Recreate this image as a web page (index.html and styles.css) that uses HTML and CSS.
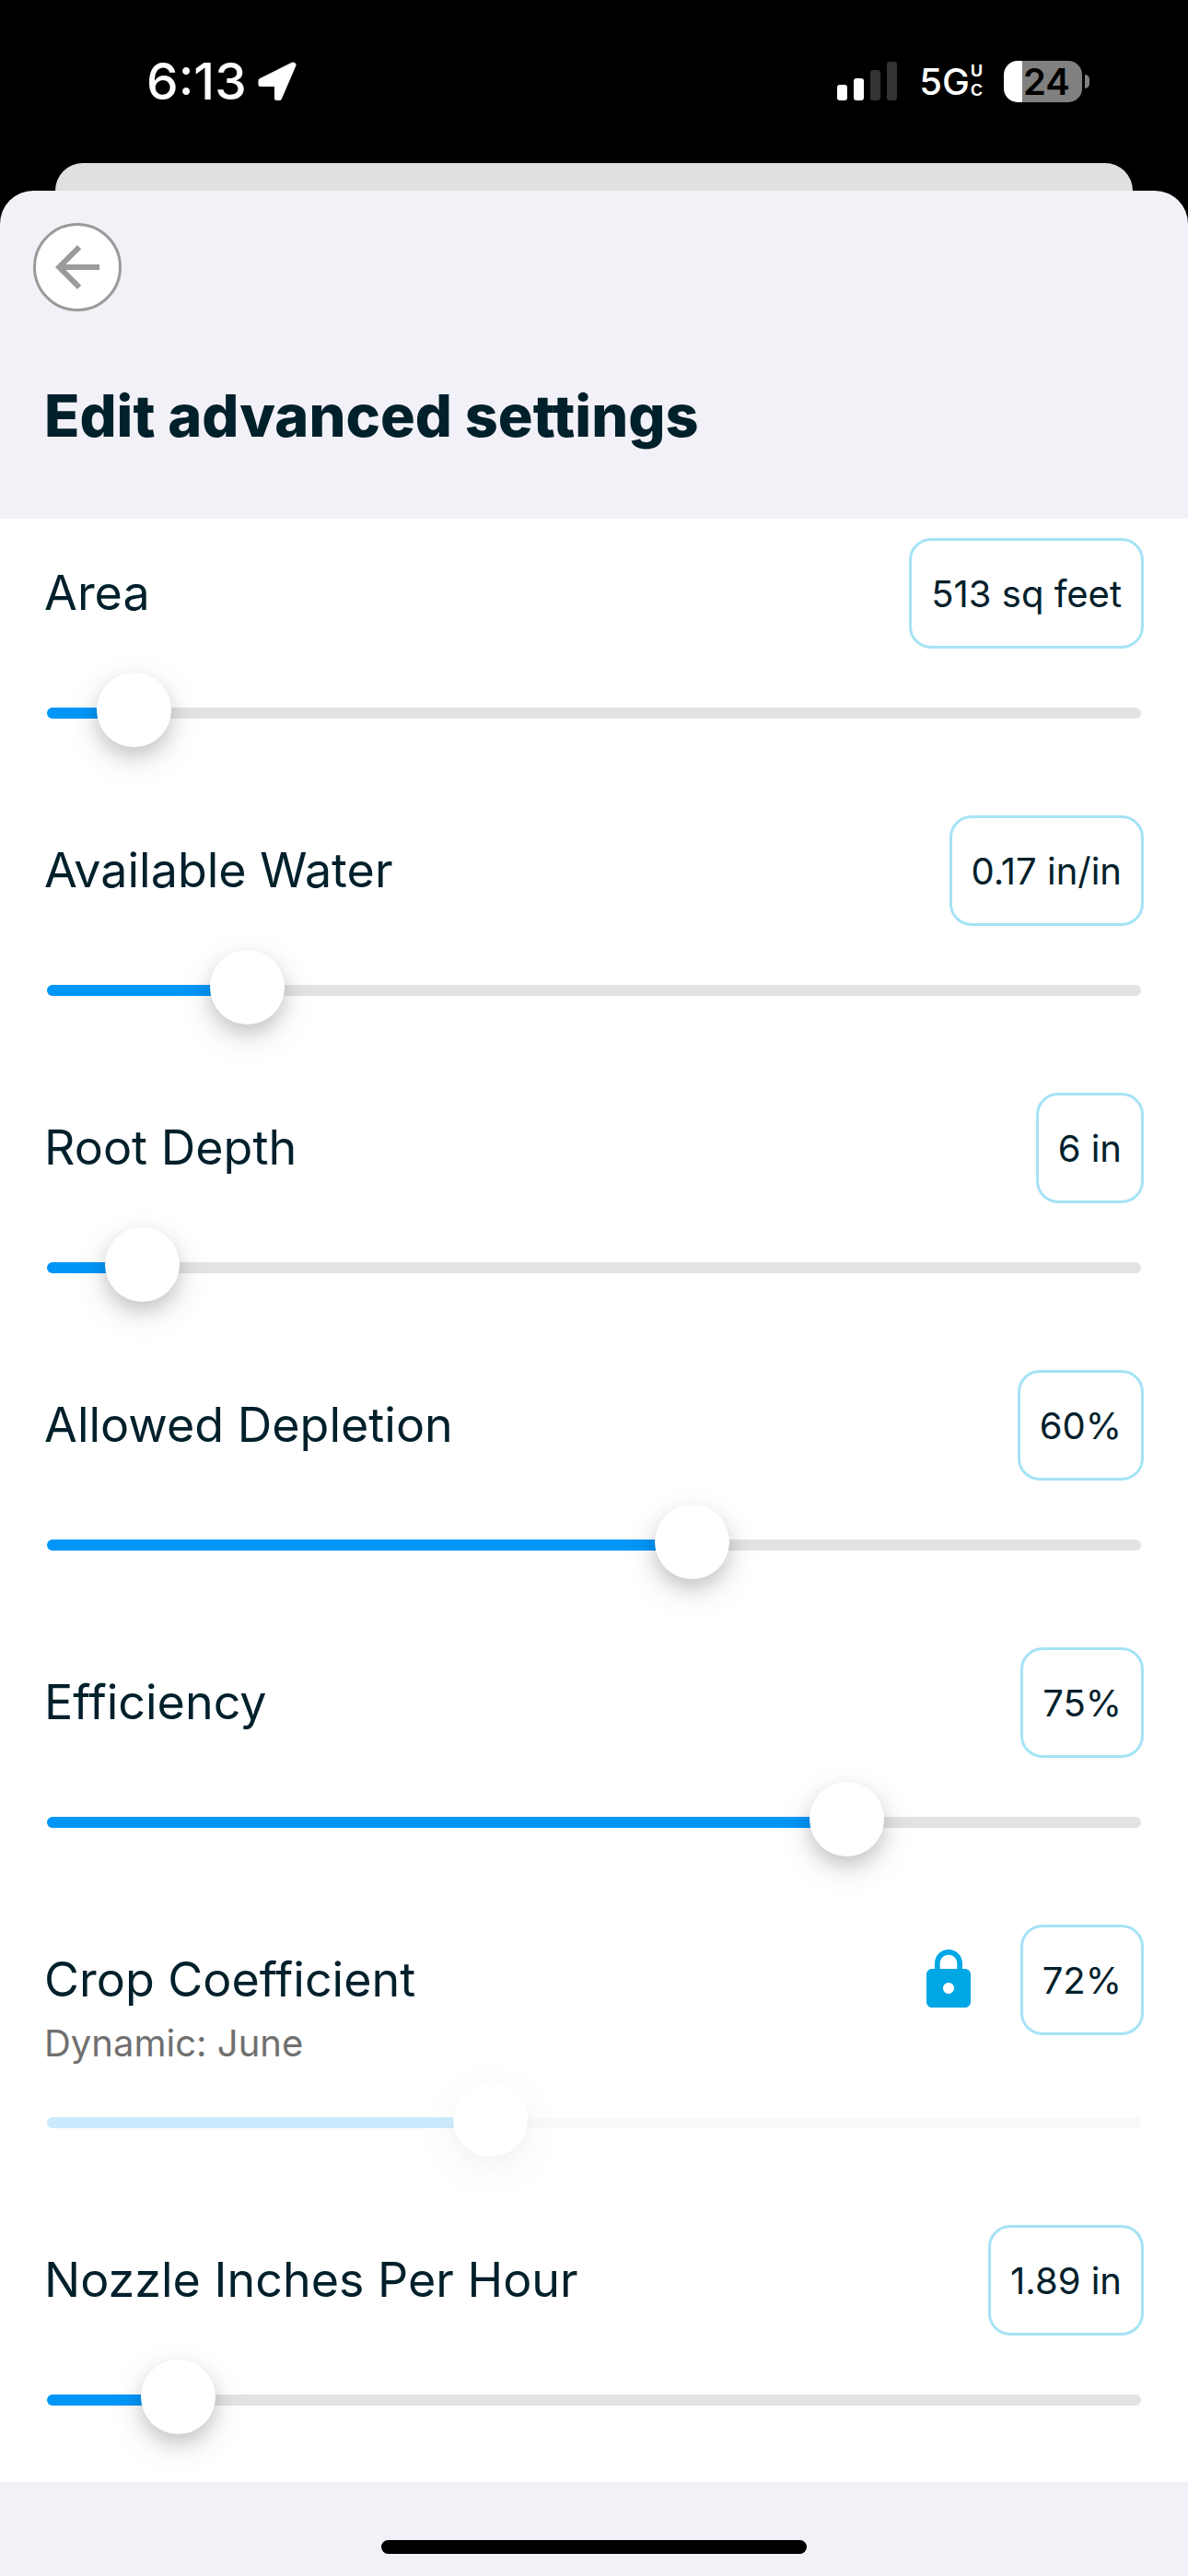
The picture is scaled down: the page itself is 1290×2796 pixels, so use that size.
FILE: index.html
```
<!DOCTYPE html>
<html lang="en">
<head>
  <meta charset="UTF-8">
  <meta name="viewport" content="width=device-width, initial-scale=1.0">
  <title>Edit advanced settings</title>
  <link rel="stylesheet" href="styles.css">
</head>
<body>
  <div class="status-bar">
    <div class="status-left">
      <span class="time">6:13</span>
      <svg class="location" viewBox="0 0 42 42" aria-hidden="true">
        <path d="M38 3 3 20.500V24.500H20.500V39.500H23.500L39 3.500Z" fill="#fff" stroke="#fff" stroke-width="5" stroke-linejoin="round"/>
      </svg>
    </div>
    <div class="status-right">
      <svg class="signal" viewBox="0 0 66 42" aria-hidden="true">
        <rect x="0" y="25" width="11" height="17" rx="3" fill="#fff"/>
        <rect x="18" y="18" width="11" height="24" rx="3" fill="#fff"/>
        <rect x="36" y="9" width="11" height="33" rx="3" fill="#333"/>
        <rect x="54" y="0" width="11" height="42" rx="3" fill="#333"/>
      </svg>
      <div class="network">
        <span>5G</span>
        <span class="network-uc"><span>U</span><span>C</span></span>
      </div>
      <div class="battery">
        <span class="battery-level">24</span>
        <span class="battery-cap"></span>
      </div>
    </div>
  </div>

  <div class="sheet-behind"></div>

  <main class="sheet">
    <header class="sheet-header">
      <button class="back" type="button" aria-label="Back">
        <svg viewBox="0 0 24 24" aria-hidden="true">
          <path d="M20 11H7.830l5.590-5.590L12 4l-8 8 8 8 1.410-1.410L7.830 13H20v-2z"/>
        </svg>
      </button>
      <h1>Edit advanced settings</h1>
    </header>

    <section class="settings">
      <div class="setting">
        <div class="setting-head">
          <label for="area">Area</label>
          <button class="value" type="button">513 sq feet</button>
        </div>
        <input type="range" id="area" min="0" max="100" step="0.1" value="4.9" style="--value: 4.9">
      </div>

      <div class="setting">
        <div class="setting-head">
          <label for="water">Available Water</label>
          <button class="value" type="button">0.17 in/in</button>
        </div>
        <input type="range" id="water" min="0" max="100" step="0.1" value="16" style="--value: 16">
      </div>

      <div class="setting">
        <div class="setting-head">
          <label for="root">Root Depth</label>
          <button class="value" type="button">6 in</button>
        </div>
        <input type="range" id="root" min="0" max="100" step="0.1" value="5.7" style="--value: 5.7">
      </div>

      <div class="setting">
        <div class="setting-head">
          <label for="depletion">Allowed Depletion</label>
          <button class="value" type="button">60%</button>
        </div>
        <input type="range" id="depletion" min="0" max="100" step="0.1" value="59.6" style="--value: 59.6">
      </div>

      <div class="setting">
        <div class="setting-head">
          <label for="efficiency">Efficiency</label>
          <button class="value" type="button">75%</button>
        </div>
        <input type="range" id="efficiency" min="0" max="100" step="0.1" value="74.8" style="--value: 74.8">
      </div>

      <div class="setting">
        <div class="setting-head">
          <div class="setting-name">
            <label for="crop">Crop Coefficient</label>
            <span class="note">Dynamic: June</span>
          </div>
          <div class="setting-value">
            <svg class="lock" viewBox="0 0 24 24" aria-hidden="true">
              <path d="M18 8h-1V6c0-2.760-2.240-5-5-5S7 3.240 7 6v2H6c-1.100 0-2 .9-2 2v10c0 1.100.9 2 2 2h12c1.100 0 2-.9 2-2V10c0-1.100-.9-2-2-2zm-6 9c-1.100 0-2-.9-2-2s.9-2 2-2 2 .9 2 2-.9 2-2 2zm3.100-9H8.900V6c0-1.710 1.390-3.100 3.100-3.100s3.100 1.390 3.100 3.100v2z"/>
            </svg>
            <button class="value" type="button">72%</button>
          </div>
        </div>
        <input type="range" id="crop" min="0" max="100" step="0.1" value="39.8" style="--value: 39.8" disabled>
      </div>

      <div class="setting">
        <div class="setting-head">
          <label for="nozzle">Nozzle Inches Per Hour</label>
          <button class="value" type="button">1.89 in</button>
        </div>
        <input type="range" id="nozzle" min="0" max="100" step="0.1" value="9.2" style="--value: 9.2">
      </div>
    </section>

    <div class="home-indicator"></div>
  </main>

  <script>
    // keep the blue part of the track in step with the thumb
    document.querySelectorAll('input[type="range"]').forEach(input => {
      input.addEventListener('input', () => {
        input.style.setProperty('--value', input.value);
      });
    });
  </script>
</body>
</html>
```
FILE: styles.css
```
* {
  box-sizing: border-box;
}

body {
  margin: 0;
  min-height: 100vh;
  display: flex;
  flex-direction: column;
  background-color: #000;
  color: #00202b;
  font-family: Inter, "Liberation Sans", sans-serif;
}

button {
  font-family: inherit;
  color: inherit;
  cursor: pointer;
}

/* status bar */
.status-bar {
  display: flex;
  justify-content: space-between;
  height: 177px;
  padding: 60px 107px 61px 159px;
  color: #fff;
}

.status-left,
.status-right,
.network {
  display: flex;
  align-items: center;
}

.status-left {
  gap: 12px;
}

.time {
  font-size: 55px;
  font-weight: 500;
  line-height: 56px;
}

.location {
  width: 42px;
  height: 42px;
}

.status-right {
  gap: 23px;
}

.signal {
  width: 66px;
  height: 42px;
}

.network {
  gap: 1px;
  font-size: 40px;
  font-weight: 500;
}

.network-uc {
  display: flex;
  flex-direction: column;
  font-family: "Liberation Sans", sans-serif;
  font-size: 18px;
  font-weight: 700;
  line-height: 21px;
}

.battery {
  display: flex;
  align-items: center;
  gap: 3px;
}

.battery-level {
  width: 85px;
  height: 45px;
  padding-left: 8px;
  border-radius: 15px;
  background: linear-gradient(to right, #fff 20px, #808080 20px);
  color: #000;
  font-size: 40px;
  font-weight: 600;
  line-height: 45px;
  text-align: center;
}

.battery-cap {
  width: 5px;
  height: 15px;
  border-radius: 0 5px 5px 0;
  background-color: #808080;
}

/* sheets */
.sheet-behind {
  height: 30px;
  margin: 0 60px;
  border-radius: 30px 30px 0 0;
  background-color: #e0e0e0;
}

.sheet {
  flex: 1;
  border-radius: 36px 36px 0 0;
  background-color: #f2f1f7;
}

.sheet-header {
  padding: 35px 36px 72px;
}

.back {
  display: flex;
  align-items: center;
  justify-content: center;
  width: 96px;
  height: 96px;
  padding: 0;
  border: 3px solid #9b9b9b;
  border-radius: 50%;
  background-color: #fff;
}

.back svg {
  width: 72px;
  height: 72px;
  fill: #9b9b9b;
}

h1 {
  margin: 73px 12px 0;
  font-size: 63px;
  font-weight: 800;
  line-height: 80px;
}

/* settings */
.settings {
  background-color: #fff;
}

.setting {
  padding: 21px 48px 53px;
}

.setting:last-child {
  padding-bottom: 52px;
}

.setting-head {
  display: flex;
  align-items: flex-start;
  justify-content: space-between;
}

.setting label {
  font-size: 52px;
  line-height: 120px;
}

.setting-name {
  display: flex;
  flex-direction: column;
}

.note {
  margin-top: -7px;
  color: #707070;
  font-size: 40px;
  line-height: 32px;
}

.setting-value {
  display: flex;
  align-items: center;
  gap: 42px;
}

.lock {
  width: 72px;
  height: 72px;
  fill: #00a7e5;
}

.value {
  height: 120px;
  padding: 0 21px;
  border: 3px solid #a6e3f6;
  border-radius: 24px;
  background-color: #fff;
  font-size: 40px;
}

/* sliders */
input[type="range"] {
  -webkit-appearance: none;
  appearance: none;
  display: block;
  width: calc(100% - 6px);
  height: 81px;
  margin: 26px 3px 0;
  padding-top: 6px;
  background: none;
}

input[type="range"]::-webkit-slider-runnable-track {
  height: 12px;
  border-radius: 6px;
  background: linear-gradient(#0096f7, #0096f7) no-repeat #e3e3e5;
  background-size: calc(40px + (100% - 81px) * var(--value) / 100) 100%;
}

input[type="range"]::-webkit-slider-thumb {
  -webkit-appearance: none;
  width: 81px;
  height: 81px;
  margin-top: -38px;
  border-radius: 50%;
  background-color: #fff;
  box-shadow: 0 12px 36px rgba(0, 0, 0, 0.14), 0 9px 18px rgba(0, 0, 0, 0.12);
}

input[type="range"]:disabled {
  opacity: 0.2;
}

/* home indicator */
.home-indicator {
  width: 462px;
  height: 15px;
  margin: 63px auto 24px;
  border-radius: 8px;
  background-color: #000;
}
```
